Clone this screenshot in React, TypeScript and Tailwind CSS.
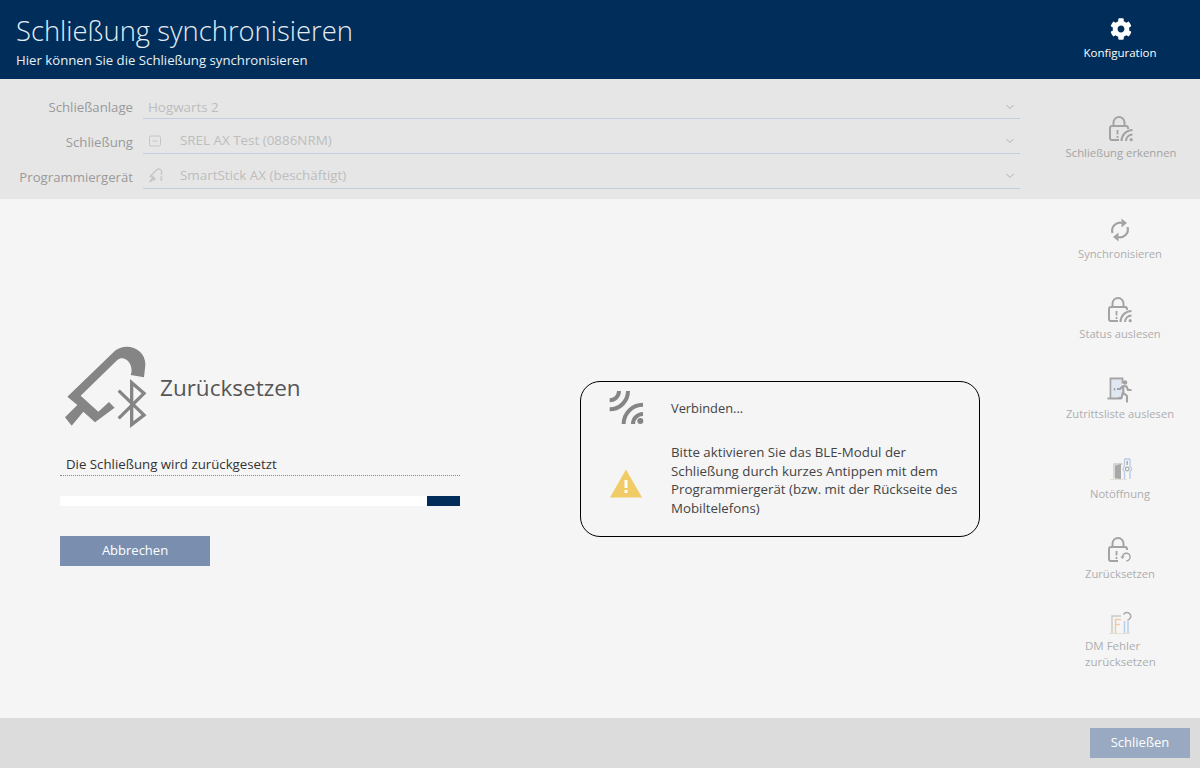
import React from "react";

const F = "font-['Open_Sans','Noto_Sans',sans-serif]";

function LockBase({ c = "#a3a3a3" }: { c?: string }) {
  return (
    <>
      <path d="M4.500 11V6.500a5.500 5.500 0 0 1 11 0V11" fill="none" stroke={c} strokeWidth="2" />
      <path d="M10 24H3a2 2 0 0 1-2-2V12a2 2 0 0 1 2-2h14a2 2 0 0 1 2 2v1" fill="none" stroke={c} strokeWidth="2" />
      <path d="M8.500 14v4.500M8.500 20v2" stroke={c} strokeWidth="1.800" />
    </>
  );
}

function LockWifi() {
  const c = "#a3a3a3";
  return (
    <svg width="24" height="26" viewBox="0 0 24 26">
      <LockBase c={c} />
      <path d="M12.500 25a11 11 0 0 1 11-11" fill="none" stroke={c} strokeWidth="2" />
      <path d="M17 25a6.500 6.500 0 0 1 6.500-6.500" fill="none" stroke={c} strokeWidth="2" />
      <circle cx="22.200" cy="23.700" r="1.600" fill={c} />
    </svg>
  );
}

function LockReset() {
  const c = "#a3a3a3";
  return (
    <svg width="24" height="26" viewBox="0 0 24 26">
      <LockBase c={c} />
      <path d="M14.500 20a3.800 3.800 0 1 1 3.800 3.800" fill="none" stroke={c} strokeWidth="1.400" />
      <path d="M12.300 19.500h4.400l-2.200 2.600z" fill={c} />
    </svg>
  );
}

function SyncIcon() {
  const c = "#a3a3a3";
  return (
    <svg width="22" height="24" viewBox="0 0 22 24">
      <path d="M3.500 15A8 8 0 0 1 13.500 5" fill="none" stroke={c} strokeWidth="2.200" />
      <path d="M12.500 0.500l5.500 4.500-5.500 4.500z" fill={c} />
      <path d="M18.500 9A8 8 0 0 1 8.500 19" fill="none" stroke={c} strokeWidth="2.200" />
      <path d="M9.500 14.500l-5.500 4.500 5.500 4.500z" fill={c} />
    </svg>
  );
}

function DoorRunner() {
  const c = "#a3a3a3";
  return (
    <svg width="26" height="26" viewBox="0 0 26 26">
      <path d="M5 3h10v18H5z" fill="#dfe7f2" />
      <path d="M0.500 21.500h14M3.500 21.500V1.500h12v5" fill="none" stroke={c} strokeWidth="1.800" />
      <circle cx="18" cy="5.500" r="2.300" fill={c} />
      <path d="M10 12h3l3-3 3.500.5 1.500 3.500h3.500M16 9l.5 7 3.500 3v6.500M16 15l-1.500 6h-3.500" fill="none" stroke={c} strokeWidth="2.100" />
      <path d="M7.500 11v2.500" stroke={c} strokeWidth="1.500" />
    </svg>
  );
}

function EmergencyIcon() {
  return (
    <svg width="24" height="24" viewBox="0 0 24 24" className="translate-x-[2px]">
      <path d="M0 21.500h17" stroke="#e4e0d6" strokeWidth="1" />
      <path d="M4 20.500V6h8.500" fill="none" stroke="#c9c9c4" strokeWidth="1.300" />
      <path d="M5 7.500l6-1.500v15l-6-.5z" fill="#a8a8a8" />
      <path d="M14.500 1v7.500a2.800 2.800 0 0 0 0 5V21M20 1v7.500a2.800 2.800 0 0 1 0 5V21M14.500 1H20" fill="none" stroke="#b6cbe5" strokeWidth="1.300" />
      <path d="M17.200 3v4" stroke="#a8a8a8" strokeWidth="1.400" />
      <circle cx="17.200" cy="11" r="1.800" fill="none" stroke="#a8a8a8" strokeWidth="1.200" />
    </svg>
  );
}

function DmIcon() {
  return (
    <svg width="24" height="24" viewBox="0 0 24 24">
      <path d="M1 22.500h21" stroke="#e4e0d6" strokeWidth="1" />
      <path d="M4 22V5h9" fill="none" stroke="#c9c9c4" strokeWidth="1.400" />
      <path d="M7.500 22V8.500h5.500M7.500 13.500h4.500" fill="none" stroke="#f2c9a8" strokeWidth="1.500" />
      <path d="M16.500 22V10M20 22V10" fill="none" stroke="#b6cbe5" strokeWidth="1.400" />
      <path d="M15.500 3.500a3.800 3.800 0 1 1 4 5.500" fill="none" stroke="#a8a8a8" strokeWidth="1.500" />
    </svg>
  );
}

function GearIcon() {
  return (
    <svg width="22" height="22" viewBox="0 0 512 512" className="translate-x-[1px]">
      <path
        fill="#ffffff"
        d="M487.400 315.700l-42.600-24.600c4.300-23.200 4.300-47 0-70.200l42.600-24.600c4.900-2.800 7.100-8.600 5.500-14-11.100-35.600-30-67.800-54.700-94.600-3.800-4.100-10-5.100-14.800-2.300L380.800 110c-17.900-15.400-38.500-27.300-60.800-35.100V25.800c0-5.600-3.900-10.500-9.400-11.700-36.700-8.200-74.300-7.800-109.200 0-5.500 1.200-9.400 6.100-9.400 11.700V75c-22.200 7.900-42.800 19.800-60.800 35.100L88.700 85.500c-4.900-2.800-11-1.900-14.800 2.300-24.700 26.700-43.600 58.900-54.700 94.600-1.700 5.400.6 11.200 5.500 14L67.300 221c-4.300 23.200-4.300 47 0 70.200l-42.600 24.600c-4.900 2.800-7.100 8.600-5.500 14 11.100 35.600 30 67.800 54.700 94.600 3.800 4.100 10 5.100 14.800 2.300l42.600-24.600c17.900 15.400 38.500 27.300 60.800 35.100v49.200c0 5.600 3.900 10.500 9.400 11.700 36.700 8.200 74.300 7.800 109.200 0 5.500-1.200 9.400-6.100 9.400-11.700v-49.200c22.200-7.900 42.800-19.800 60.800-35.100l42.600 24.600c4.900 2.800 11 1.900 14.800-2.300 24.700-26.700 43.600-58.900 54.700-94.600 1.500-5.500-.7-11.300-5.600-14.100zM256 336c-44.100 0-80-35.900-80-80s35.900-80 80-80 80 35.900 80 80-35.900 80-80 80z"
      />
    </svg>
  );
}

function StickBig() {
  const c = "#858585";
  return (
    <svg width="90" height="90" viewBox="60 45 270 270" className="shrink-0">
      <path
        d="M82 200L225 62C262 34 318 58 316 105L312 142L272 135C284 104 254 72 232 90L122 197L175 245L207 216L224 233L165 277L130 245L95 287L75 262L112 225Z"
        fill={c}
      />
      <path d="M236 182L312 255L275 284V158L312 190L236 265" fill="none" stroke="#f5f5f5" strokeWidth="20" />
      <path d="M236 182L312 255L275 284V158L312 190L236 265" fill="none" stroke={c} strokeWidth="10" />
    </svg>
  );
}

function WifiIcon() {
  const c = "#858585";
  return (
    <svg width="36" height="36" viewBox="118 62 108 108">
      <path d="M120 120A55 55 0 0 0 175 65" fill="none" stroke={c} strokeWidth="12" />
      <path d="M120 93A28 28 0 0 0 148 65" fill="none" stroke={c} strokeWidth="12" />
      <path d="M162 164A58 58 0 0 1 220 106" fill="none" stroke={c} strokeWidth="12" />
      <path d="M190 164A30 30 0 0 1 220 134" fill="none" stroke={c} strokeWidth="12" />
      <circle cx="212" cy="155" r="9" fill={c} />
    </svg>
  );
}

function WarnIcon() {
  return (
    <svg width="34" height="30" viewBox="0 0 34 30">
      <path d="M17 0.500L33 28.500H1z" fill="#f0cb66" />
      <path d="M15.500 11h3v8h-3zM15.500 21h3v3h-3z" fill="#ffffff" />
    </svg>
  );
}

function SmallStick() {
  const c = "#c6c6c6";
  return (
    <svg width="16" height="16" viewBox="0 0 16 16">
      <path d="M1.500 9L8.500 2a3 3 0 0 1 5 3v2" fill="none" stroke={c} strokeWidth="1.300" />
      <path d="M1 13l3-3-1.500-1.500L4 7l4 4-2 2-1-1-2.500 2.500z" fill={c} />
      <path d="M12 9l2.500 2.500L13 13V8l1.500 1.500L12 12" fill="none" stroke={c} strokeWidth="0.800" />
    </svg>
  );
}

function Chevron() {
  return (
    <svg width="8" height="6" viewBox="0 0 8 6" className="shrink-0">
      <path d="M0.500 1l3.500 3.500L7.500 1" fill="none" stroke="#b0b0b0" strokeWidth="1" />
    </svg>
  );
}

function FormRow({ label, value, icon, h, pt }: { label: string; value: string; icon?: React.ReactNode; h: string; pt: string }) {
  return (
    <div className={`flex items-end ${h}`}>
      <div className="w-[133px] pb-[1px] text-right text-[13.200px] leading-[22px] text-[#9a9a9a]">{label}</div>
      <div className={`ml-[10px] flex h-full flex-1 items-center border-b border-[#c3cde0] pl-[5px] pr-[6px] ${pt}`}>
        {icon ? <div className="flex w-[32px] shrink-0">{icon}</div> : null}
        <div className="flex-1 text-[13.400px] text-[#bdbdbd]">{value}</div>
        <Chevron />
      </div>
    </div>
  );
}

function RailItem({ icon, label }: { icon: React.ReactNode; label: string }) {
  return (
    <div className="flex h-[80px] flex-col items-center">
      <div className="flex h-[26px] items-center justify-center">{icon}</div>
      <div className="mt-[2px] whitespace-nowrap text-[11.200px] leading-[17px] text-[#aeaeae]">{label}</div>
    </div>
  );
}

export default function App() {
  return (
    <div className={`flex h-[768px] w-[1200px] flex-col overflow-hidden bg-[#f5f5f5] ${F}`}>
      <header className="flex h-[79px] shrink-0 bg-[#002d59]">
        <div className="flex-1 pl-[16px] pt-[12px]">
          <div className="text-[27.400px] font-light leading-[38px] text-[#e4edf5]">Schließung synchronisieren</div>
          <div className="mt-[2px] text-[13.200px] leading-[16px] text-[#e8f0f6]">Hier können Sie die Schließung synchronisieren</div>
        </div>
        <div className="flex w-[160px] flex-col items-center pt-[18px]">
          <GearIcon />
          <div className="mt-[4px] text-[11.500px] leading-[17px] text-white">Konfiguration</div>
        </div>
      </header>

      <section className="flex h-[120px] shrink-0 bg-[#e6e6e6]">
        <div className="flex w-[1020px] flex-col pt-[10px]">
          <FormRow label="Schließanlage" value="Hogwarts 2" h="h-[30px]" pt="pt-[7px]" />
          <FormRow
            label="Schließung"
            value="SREL AX Test (0886NRM)"
            h="h-[35px]"
            pt="pt-[9px]"
            icon={
              <svg width="14" height="14" viewBox="0 0 14 14">
                <rect x="1.500" y="2" width="11" height="10" rx="1.500" fill="none" stroke="#c6c6c6" />
                <path d="M4.500 7h5" stroke="#c6c6c6" />
              </svg>
            }
          />
          <FormRow label="Programmiergerät" value="SmartStick AX (beschäftigt)" h="h-[35px]" pt="pt-[9px]" icon={<SmallStick />} />
        </div>
        <div className="flex flex-1 flex-col items-center pl-[22px] pt-[37px]">
          <LockWifi />
          <div className="mt-[2px] whitespace-nowrap text-[11.300px] leading-[17px] text-[#a3a3a3]">Schließung erkennen</div>
        </div>
      </section>

      <main className="flex min-h-0 flex-1">
        <div className="ml-[60px] mt-[146px] w-[400px]">
          <div className="flex h-[90px] items-center">
            <StickBig />
            <div className="mb-[4px] ml-[10px] text-[22.500px] leading-[30px] text-[#555555]">Zurücksetzen</div>
          </div>
          <div className="mt-[20px] border-b border-dotted border-[#8a8a8a] pb-[2px] pl-[6px] text-[13.250px] leading-[18px] text-[#333333]">
            Die Schließung wird zurückgesetzt
          </div>
          <div className="mt-[20px] flex h-[10px] justify-end bg-white">
            <div className="w-[33px] bg-[#002d59]" />
          </div>
          <button className="mt-[30px] block h-[30px] w-[150px] bg-[#7a8fb0] text-[13px] text-white">Abbrechen</button>
        </div>

        <div className="ml-[120px] mt-[182px] h-[156px] w-[400px] rounded-[20px] border border-black">
          <div className="flex h-[54px] items-start pl-[28px] pt-[8px]">
            <div className="w-[62px] shrink-0">
              <WifiIcon />
            </div>
            <div className="pt-[9px] text-[12.850px] leading-[18px] text-[#444444]">Verbinden...</div>
          </div>
          <div className="flex items-center pl-[28px] pr-[20px] pt-[7px]">
            <div className="w-[62px] shrink-0 pt-[8px]">
              <WarnIcon />
            </div>
            <div className="text-[13.300px] leading-[18.500px] text-[#444444]">
              Bitte aktivieren Sie das BLE-Modul der Schließung durch kurzes Antippen mit dem Programmiergerät (bzw. mit der Rückseite des Mobiltelefons)
            </div>
          </div>
        </div>

        <aside className="ml-auto flex w-[160px] shrink-0 flex-col pt-[18px]">
          <RailItem icon={<SyncIcon />} label="Synchronisieren" />
          <RailItem icon={<LockWifi />} label="Status auslesen" />
          <RailItem icon={<DoorRunner />} label="Zutrittsliste auslesen" />
          <RailItem icon={<EmergencyIcon />} label="Notöffnung" />
          <RailItem icon={<LockReset />} label="Zurücksetzen" />
          <div className="-mt-[7px] flex flex-col items-center">
            <div className="flex h-[26px] items-center">
              <DmIcon />
            </div>
            <div className="mt-[2px] w-[70px] text-[11.500px] leading-[16px] text-[#aeaeae]">DM Fehler zurücksetzen</div>
          </div>
        </aside>
      </main>

      <footer className="flex h-[50px] shrink-0 items-start justify-end bg-[#dcdcdc] pr-[10px] pt-[10px]">
        <button className="h-[30px] w-[100px] bg-[#99a9c1] text-[13px] text-white">Schließen</button>
      </footer>
    </div>
  );
}
